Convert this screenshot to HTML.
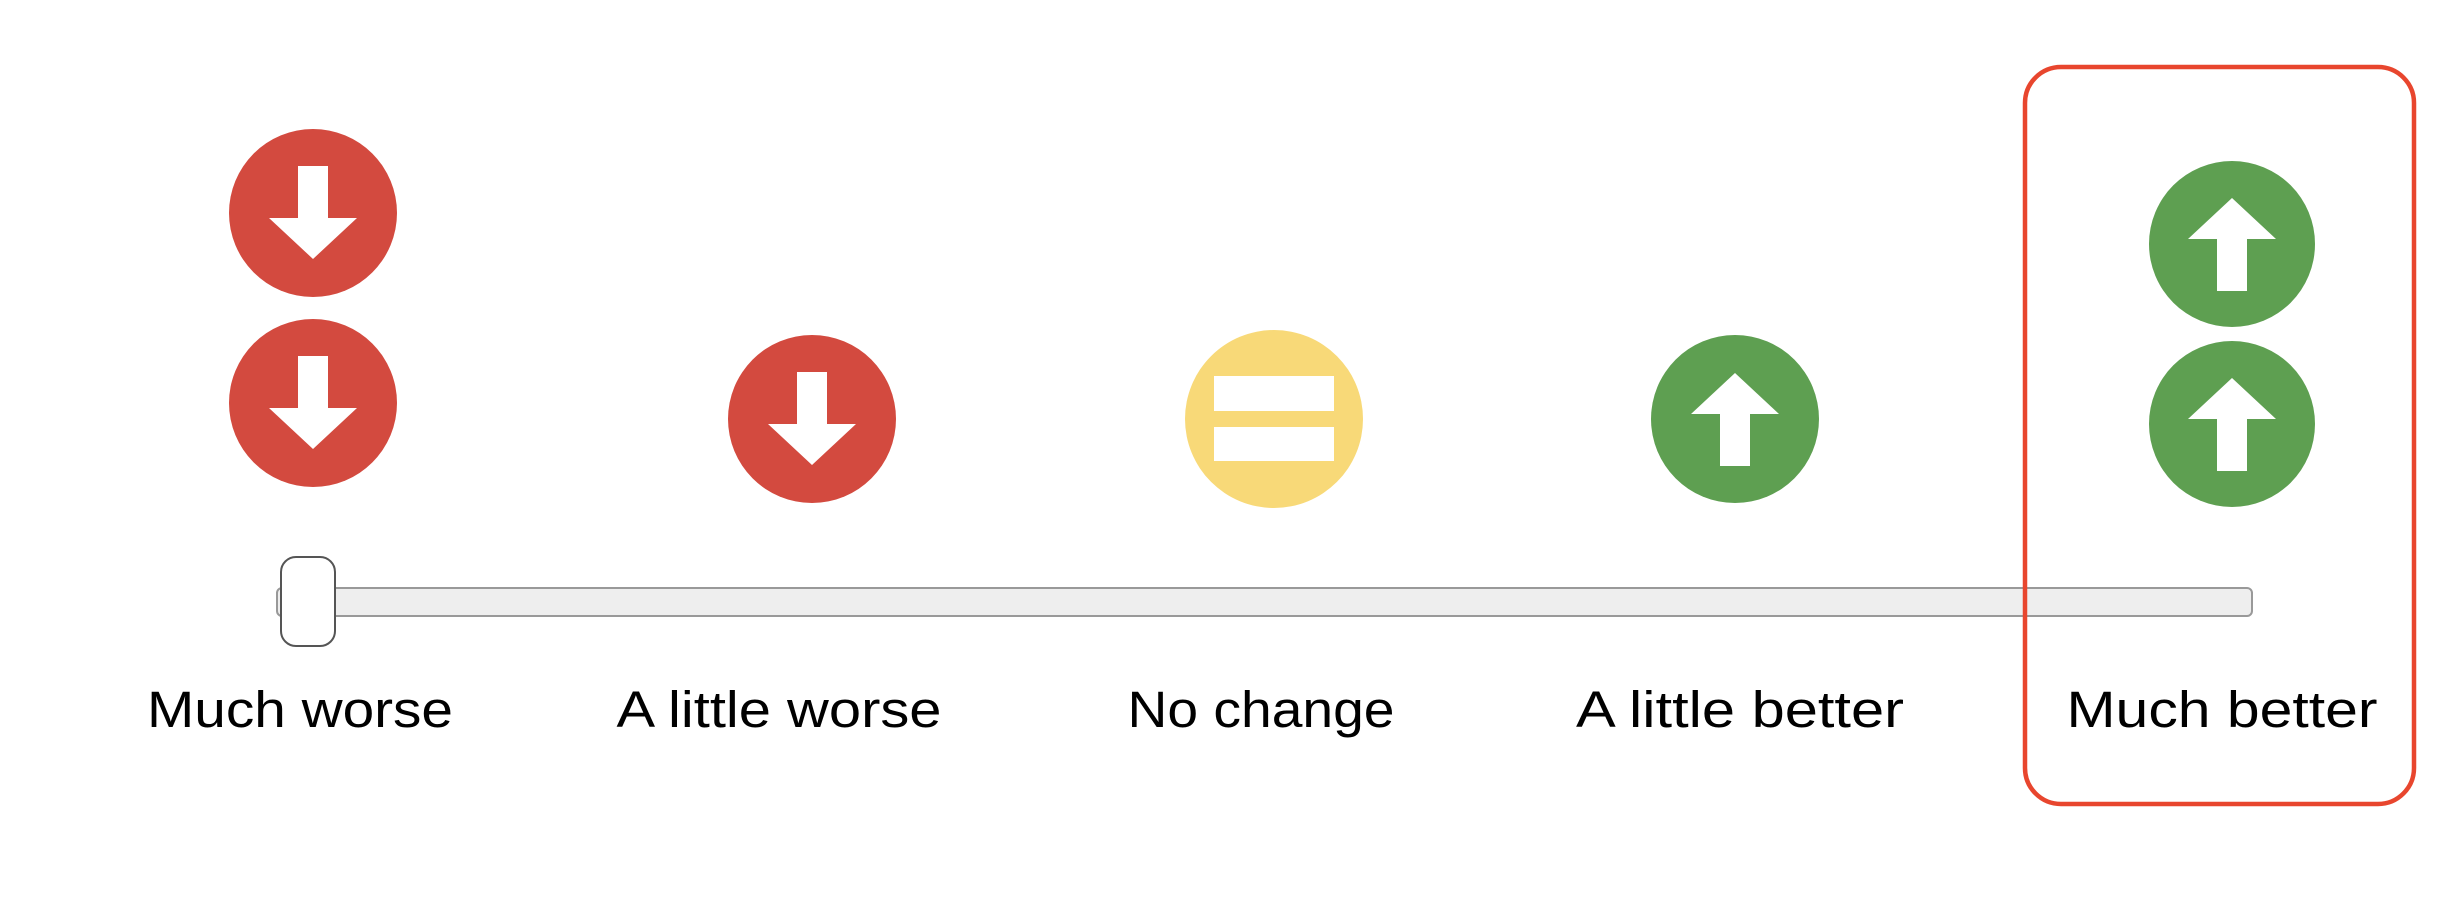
<!DOCTYPE html>
<html><head><meta charset="utf-8"><style>
html,body{margin:0;padding:0;background:#fff;width:2462px;height:918px;overflow:hidden}
</style></head><body>
<svg width="2462" height="918" viewBox="0 0 2462 918" xmlns="http://www.w3.org/2000/svg">
<defs>
<g id="down"><path d="M-15,-47 H15 V5 H44 L0,46 L-44,5 H-15 Z" fill="#fff"/></g>
<g id="up"><path d="M-15,47 H15 V-5 H44 L0,-46 L-44,-5 H-15 Z" fill="#fff"/></g>
</defs>
<g fill="#d34a3f">
<circle cx="313" cy="213" r="84"/><circle cx="313" cy="403" r="84"/><circle cx="812" cy="419" r="84"/>
</g>
<use href="#down" x="313" y="213"/><use href="#down" x="313" y="403"/><use href="#down" x="812" y="419"/>
<circle cx="1274" cy="419" r="89" fill="#f8d978"/>
<rect x="1214" y="376" width="120" height="35" fill="#fff"/>
<rect x="1214" y="427" width="120" height="34" fill="#fff"/>
<g fill="#5e9f51">
<circle cx="1735" cy="419" r="84"/><circle cx="2232" cy="244" r="83"/><circle cx="2232" cy="424" r="83"/>
</g>
<use href="#up" x="1735" y="419"/><use href="#up" x="2232" y="244"/><use href="#up" x="2232" y="424"/>
<rect x="277" y="588" width="1975" height="28" rx="5" fill="#eeeeee" stroke="#999" stroke-width="2"/>
<rect x="281" y="557" width="54" height="89" rx="15" fill="#fff" stroke="#555" stroke-width="2"/>
<g font-family="Liberation Sans, sans-serif" font-size="51" fill="#000" text-anchor="middle">
<text x="300" y="727" textLength="306" lengthAdjust="spacingAndGlyphs">Much worse</text>
<text x="779" y="727" textLength="325" lengthAdjust="spacingAndGlyphs">A little worse</text>
<text x="1261" y="727" textLength="267" lengthAdjust="spacingAndGlyphs">No change</text>
<text x="1740" y="727" textLength="328" lengthAdjust="spacingAndGlyphs">A little better</text>
<text x="2222" y="727" textLength="311" lengthAdjust="spacingAndGlyphs">Much better</text>
</g>
<rect x="2025" y="67" width="389" height="737" rx="36" fill="none" stroke="#e8462e" stroke-width="4.5"/>
</svg>
</body></html>
